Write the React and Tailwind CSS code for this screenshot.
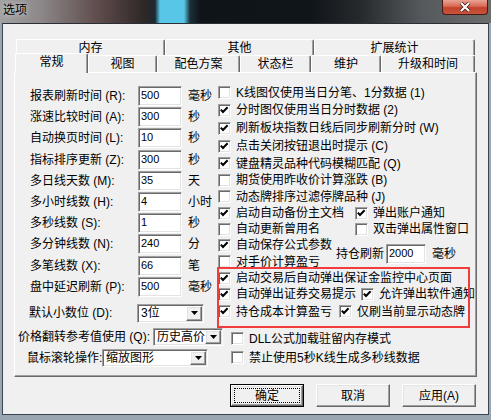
import React from 'react';

const sunken =
  'bg-white border border-t-[#a0a0a0] border-l-[#a0a0a0] border-r-white border-b-white shadow-[inset_1px_1px_0_#696969,inset_-1px_-1px_0_#e3e3e3]';
const raised =
  'bg-[#f0f0f0] border border-t-white border-l-white border-r-[#696969] border-b-[#696969] shadow-[inset_-1px_-1px_0_#a0a0a0,inset_1px_1px_0_#e3e3e3]';

function Check({ on }) {
  return (
    <span className={`w-[13px] h-[13px] shrink-0 flex ${sunken}`}>
      {on && (
        <svg width="11" height="11" viewBox="0 0 11 11">
          <path d="M1.8 4.6 L4 7 L8.6 2.3" fill="none" stroke="#000" strokeWidth="2" />
        </svg>
      )}
    </span>
  );
}

function Item({ on, label, className = '' }) {
  return (
    <div className={`flex items-center gap-[5px] whitespace-nowrap ${className}`}>
      <Check on={on} />
      <span>{label}</span>
    </div>
  );
}

function Field({ value, className = '' }) {
  return (
    <div className={`${sunken} h-5 flex items-center pl-[2px] pb-[2px] text-[11px] ${className}`}>
      {value}
    </div>
  );
}

function Arrow() {
  return (
    <svg width="7" height="4" viewBox="0 0 7 4">
      <path d="M0 0 H7 L3.5 4 Z" fill="#000" />
    </svg>
  );
}

function Combo({ value, className = '' }) {
  return (
    <div className={`${sunken} flex items-stretch p-[1px] ${className}`}>
      <span className="flex-1 flex items-center pl-[2px] overflow-hidden whitespace-nowrap">{value}</span>
      <span className={`${raised} w-[16px] flex items-center justify-center`}>
        <Arrow />
      </span>
    </div>
  );
}

const leftRows = [
  ['报表刷新时间 (R):', '500', '毫秒'],
  ['涨速比较时间 (A):', '300', '秒'],
  ['自动换页时间 (L):', '10', '秒'],
  ['指标排序更新 (Z):', '300', '秒'],
  ['多日线天数 (M):', '35', '天'],
  ['多小时线数 (H):', '4', '小时'],
  ['多秒线数 (S):', '1', '秒'],
  ['多分钟线数 (N):', '240', '分'],
  ['多笔线数 (X):', '66', '笔'],
  ['盘中延迟刷新 (P):', '500', '毫秒'],
];

const topChecks = [
  [false, 'K线图仅使用当日分笔、1分数据 (1)', 'h-[17px]'],
  [true, '分时图仅使用当日分时数据 (2)', 'h-[18px]'],
  [true, '刷新板块指数日线后同步刷新分时 (W)', 'h-[18px]'],
  [true, '点击关闭按钮退出时提示 (C)', 'h-[18px]'],
  [true, '键盘精灵品种代码模糊匹配 (Q)', 'h-[17px]'],
  [false, '期货使用昨收价计算涨跌 (B)', 'h-[16px]'],
  [false, '动态牌排序过滤停牌品种 (J)', 'h-[17px]'],
];

function TabTop({ label, className }) {
  return (
    <div
      className={`h-[16px] flex items-center justify-center border-t border-l border-t-white border-l-white border-r border-r-[#696969] rounded-t-[2px] shadow-[inset_-1px_0_0_#a0a0a0] ${className}`}
    >
      {label}
    </div>
  );
}

function Tab({ label, className, selected }) {
  if (selected) {
    return (
      <div
        className={`relative z-10 h-[20px] -mb-px bg-[#f0f0f0] flex items-start pt-[1px] justify-center border-t border-l border-t-white border-l-white border-r border-r-[#696969] rounded-t-[2px] shadow-[inset_-1px_0_0_#a0a0a0] ${className}`}
      >
        {label}
      </div>
    );
  }
  return (
    <div
      className={`h-[17px] flex items-center justify-center border-t border-l border-t-white border-l-white border-r border-r-[#696969] rounded-t-[2px] shadow-[inset_-1px_0_0_#a0a0a0] ${className}`}
    >
      {label}
    </div>
  );
}

function Button({ label, isDefault }) {
  if (isDefault) {
    return (
      <div className="w-[74px] h-[23px] border border-black flex">
        <div className={`${raised} flex-1 flex p-[2px]`}>
          <div className="flex-1 border border-dotted border-black flex items-center justify-center">
            {label}
          </div>
        </div>
      </div>
    );
  }
  return (
    <div className={`${raised} w-[74px] h-[23px] flex items-center justify-center`}>{label}</div>
  );
}

export default function App() {
  return (
    <div className="w-[491px] h-[420px] overflow-hidden flex flex-col bg-[#9aa6b2] text-[12px] leading-[14px] text-black font-['Liberation_Sans','Noto_Sans_CJK_SC',sans-serif]">
      {/* title bar */}
      <div className="h-[23px] shrink-0 flex justify-between items-start bg-[linear-gradient(to_right,#a2a2a2_0px,#8d8889_40px,#5d4a4a_100px,#2e2727_145px,#1c2a33_155px,#58c6e6_160px,#58c6e6_184px,#1b303b_190px,#0f1419_200px,#10151a_310px,#26292c_360px,#54585c_420px,#6c6c6c_491px)]">
        <span className="ml-[3px] mt-[2px] text-[12px] leading-[16px] [text-shadow:0_0_5px_rgba(255,255,255,0.8)]">选项</span>
        <div className="mr-[3px] w-[46px] h-[15px] rounded-b-[4px] border border-t-0 border-[#4a1a14] bg-[linear-gradient(to_bottom,#e9a394_0%,#d86a54_45%,#c2412a_55%,#c8553c_100%)] flex items-center justify-center">
          <svg width="12" height="10" viewBox="0 0 12 10">
            <path d="M2 1 L10 9 M10 1 L2 9" stroke="#3a1010" strokeWidth="3.6" />
            <path d="M2 1 L10 9 M10 1 L2 9" stroke="#fff" strokeWidth="2.2" />
          </svg>
        </div>
      </div>

      {/* client area */}
      <div className="mx-[2px] mb-[5px] flex-1 border border-[#3b4550] border-t-[#2a2f35] bg-[#f0f0f0] flex flex-col">
        <div className="pt-[15px]">
          <div className="ml-[13px] flex">
            <TabTop label="内存" className="w-[149px]" />
            <TabTop label="其他" className="w-[149px]" />
            <TabTop label="扩展统计" className="w-[161px]" />
          </div>
          <div className="ml-[12px] h-[17px] flex items-end">
            <Tab label="常规" className="w-[73px]" selected />
            <Tab label="视图" className="w-[69px]" />
            <Tab label="配色方案" className="w-[83px]" />
            <Tab label="状态栏" className="w-[71px]" />
            <Tab label="维护" className="w-[70px]" />
            <Tab label="升级和时间" className="w-[94px]" />
          </div>
        </div>

        {/* panel */}
        <div className="relative ml-[11px] w-[463px] h-[305px] border border-t-white border-l-white border-r-[#696969] border-b-[#696969] shadow-[inset_-1px_-1px_0_#a0a0a0] flex flex-col">
          <div className="h-[254px] flex">
            {/* left column */}
            <div className="w-[202px] pt-[13px] flex flex-col">
              <div className="flex flex-col gap-[1.2px]">
                {leftRows.map(([label, value, unit]) => (
                  <div key={label} className="h-5 flex items-center">
                    <span className="w-[123px] pl-[15px] whitespace-nowrap">{label}</span>
                    <Field value={value} className="w-[44px]" />
                    <span className="ml-[6px] whitespace-nowrap">{unit}</span>
                  </div>
                ))}
              </div>
              <div className="mt-[7px] h-[19px] flex items-center">
                <span className="w-[122px] pl-[14px] whitespace-nowrap">默认小数位 (D):</span>
                <Combo value="3位" className="w-[67px] h-[19px]" />
              </div>
            </div>

            {/* right column */}
            <div className="flex-1 pt-[11px] pl-[1px] flex flex-col">
              {topChecks.map(([on, label, h]) => (
                <Item key={label} on={on} label={label} className={h} />
              ))}
              <div className="h-[16px] flex items-center">
                <Item on label="启动自动备份主文档" className="w-[137px]" />
                <Item on label="弹出账户通知" />
              </div>
              <div className="h-[16px] flex items-center">
                <Item on={false} label="自动更新曾用名" className="w-[137px]" />
                <Item on={false} label="双击弹出属性窗口" />
              </div>
              <div className="h-[33px] flex items-center">
                <div className="w-[118px] flex flex-col">
                  <Item on label="自动保存公式参数" className="h-[16px]" />
                  <Item on={false} label="对手价计算盈亏" className="h-[17px]" />
                </div>
                <span className="w-[50px] whitespace-nowrap">持仓刷新</span>
                <Field value="2000" className="w-[40px]" />
                <span className="ml-[6px]">毫秒</span>
              </div>
              <Item on label="启动交易后自动弹出保证金监控中心页面" className="h-[16px]" />
              <div className="h-[16px] flex items-center">
                <Item on label="自动弹出证券交易提示" className="w-[143px]" />
                <Item on label="允许弹出软件通知" />
              </div>
              <div className="h-[19px] flex items-center">
                <Item on label="持仓成本计算盈亏" className="w-[121px]" />
                <Item on label="仅刷当前显示动态牌" />
              </div>
            </div>
          </div>

          {/* bottom rows */}
          <div className="h-5 flex items-center">
            <div className="w-[216px] pl-[3px] flex items-center">
              <span className="w-[135px] whitespace-nowrap">价格翻转参考值使用 (Q):</span>
              <Combo value="历史高价" className="w-[70px] h-[18px]" />
            </div>
            <Item on={false} label="DLL公式加载驻留内存模式" className="mt-[3px]" />
          </div>
          <div className="h-[21px] flex items-center">
            <div className="w-[216px] pl-[12px] flex items-center">
              <span className="w-[75px] whitespace-nowrap">鼠标滚轮操作:</span>
              <Combo value="缩放图形" className="w-[106px] h-[18px]" />
            </div>
            <Item on={false} label="禁止使用5秒K线生成多秒线数据" />
          </div>

          {/* annotation box */}
          <div className="absolute left-[202px] top-[194px] w-[253px] h-[61px] border-2 border-[#f23c3c] pointer-events-none" />
        </div>

        {/* buttons */}
        <div className="mt-[7px] pr-[12px] flex justify-end gap-[12px]">
          <Button label="确定" isDefault />
          <Button label="取消" />
          <Button label="应用(A)" />
        </div>
      </div>
    </div>
  );
}
